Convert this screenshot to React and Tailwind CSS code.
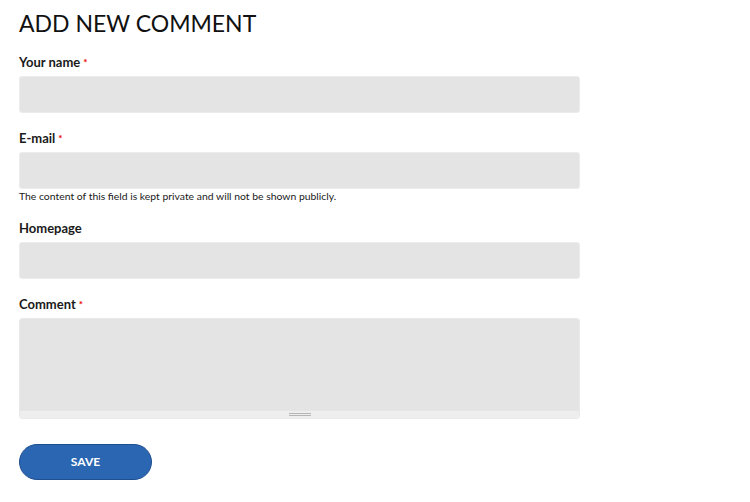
const Field = ({ label, required, children, description }) => (
  <div className="mb-[17px]">
    <label className="block text-[13px] font-bold text-[#1a1a1a] leading-[16px] mb-[6px]">
      {label}
      {required && <span className="text-[#e00] ml-[3px] text-[10px] align-top">*</span>}
    </label>
    {children}
    {description && (
      <p className="text-[10.4px] text-[#1a1a1a] leading-[13px] mt-[1px]">{description}</p>
    )}
  </div>
);

const Input = () => (
  <input
    type="text"
    className="block w-full h-[37px] bg-[#e4e4e4] border border-[#ececec] rounded-[3px] outline-none"
  />
);

export default function App() {
  return (
    <div className="min-h-[502px] bg-white font-['Lato','Liberation_Sans',sans-serif] text-[#222] px-[19px] pt-[9px]">
      <form className="w-[561px]">
        <h2 className="text-[23px] leading-[28px] font-normal text-[#111] mb-[17px]">ADD NEW COMMENT</h2>

        <Field label="Your name" required>
          <Input />
        </Field>

        <Field
          label="E-mail"
          required
          description="The content of this field is kept private and will not be shown publicly."
        >
          <Input />
        </Field>

        <Field label="Homepage">
          <Input />
        </Field>

        <Field label="Comment" required>
          <div className="border border-[#e9e9e9] rounded-[3px] overflow-hidden">
            <textarea className="block w-full h-[91px] bg-[#e4e4e4] resize-none outline-none" />
            <div className="h-[8px] bg-[#eeeeee] border-t border-[#e6e6e6] flex items-center justify-center">
              <div className="w-[22px] h-[3px] border-t border-b border-[#b5b5b5]" />
            </div>
          </div>
        </Field>

        <button
          type="button"
          className="mt-[8px] w-[133px] h-[36px] rounded-full bg-[#2a66b2] border border-[#1f4f8f] text-white text-[12px] font-bold"
        >
          SAVE
        </button>
      </form>
    </div>
  );
}
